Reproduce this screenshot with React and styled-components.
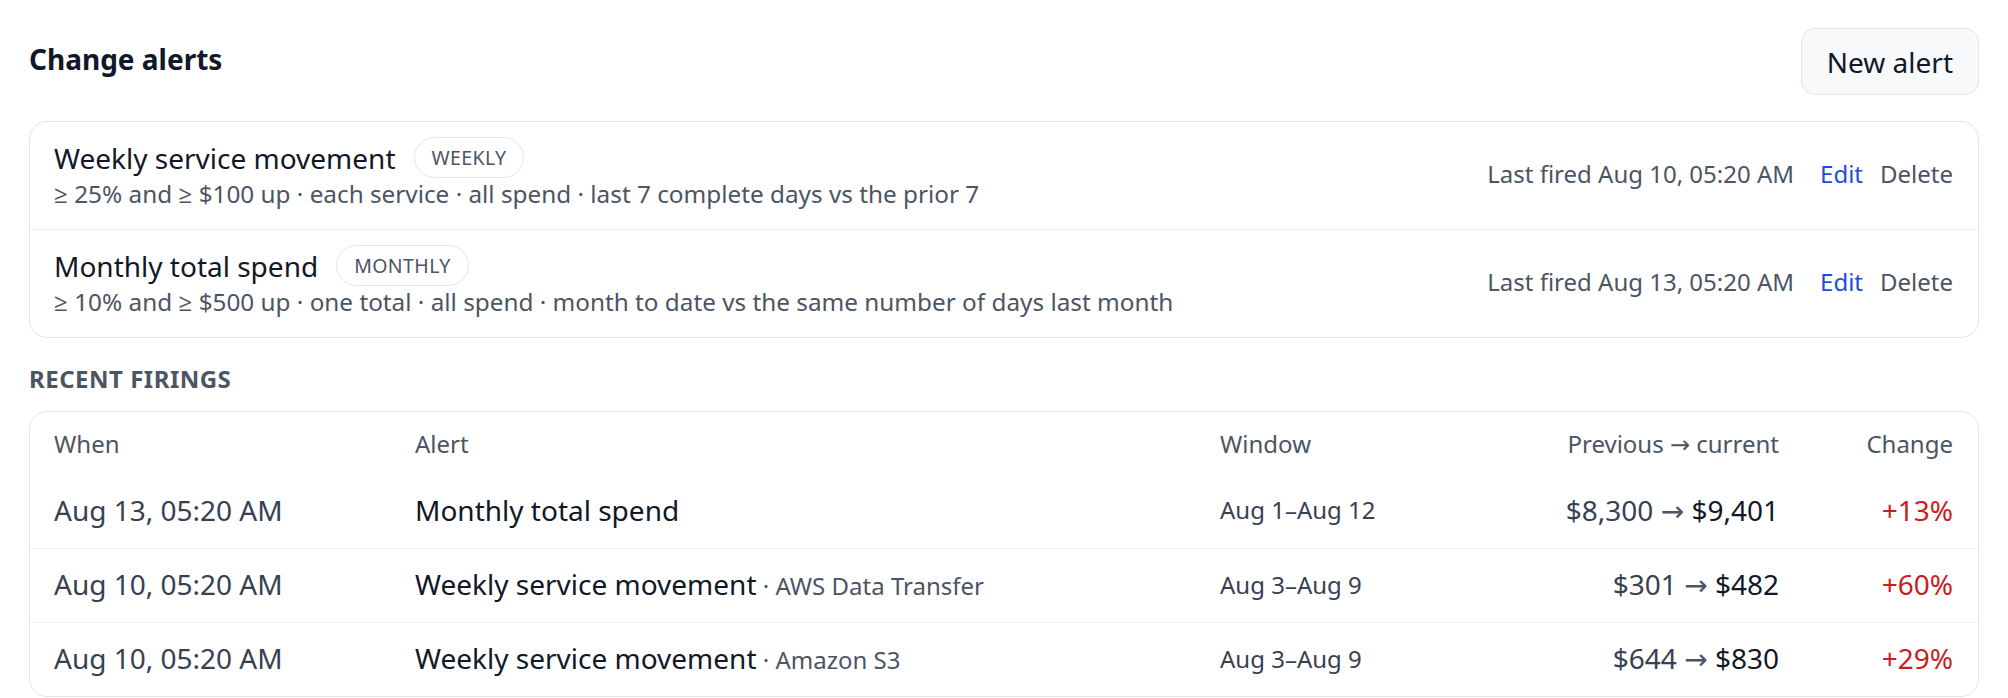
import React from 'react'
import styled, { createGlobalStyle } from 'styled-components'

const GlobalStyle = createGlobalStyle`
  body {
    margin: 0;
    background: #fff;
    font-family: "Noto Sans", "Open Sans", sans-serif;
    color: #111827;
  }
`

const Page = styled.div`
  padding: 28px 29px 0;
`

const TopBar = styled.div`
  display: flex;
  justify-content: space-between;
  align-items: center;
  margin-bottom: 26px;
`

const Heading = styled.h1`
  margin: 0 0 6px;
  font-size: 28px;
  font-weight: 700;
  color: #111827;
`

const Button = styled.button`
  height: 67px;
  padding: 0 25px;
  border: 1px solid #e3e5ea;
  border-radius: 14px;
  background: #f8f9fb;
  font-family: inherit;
  font-size: 28px;
  color: #111827;
  cursor: pointer;
`

const Card = styled.div`
  border: 1px solid #e3e5ea;
  border-radius: 18px;
  overflow: hidden;
`

const AlertRow = styled.div`
  display: flex;
  align-items: center;
  justify-content: space-between;
  padding: 15px 25px 19px 24px;
  & + & {
    border-top: 1px solid #eceef1;
  }
`

const TitleLine = styled.div`
  display: flex;
  align-items: center;
  gap: 18px;
  height: 41px;
`

const AlertName = styled.span`
  font-size: 28px;
  color: #111827;
`

const Badge = styled.span`
  display: inline-flex;
  align-items: center;
  height: 41px;
  box-sizing: border-box;
  padding: 0 17px;
  border: 1.5px solid #e3e5ea;
  border-radius: 999px;
  font-size: 19.5px;
  letter-spacing: 0.4px;
  color: #4b5563;
`

const Summary = styled.div`
  font-size: 24.3px;
  line-height: 32px;
  color: #4b5563;
`

const Actions = styled.div`
  display: flex;
  align-items: center;
  gap: 17px;
  font-size: 24px;
  color: #4b5563;
`

const LastFired = styled.span`
  margin-right: 9px;
`

const ActionLink = styled.a`
  color: ${(p) => (p.$primary ? '#1d4ed8' : '#4b5563')};
  text-decoration: none;
  cursor: pointer;
`

const SectionLabel = styled.div`
  margin: 24px 0 16px;
  font-size: 24px;
  font-weight: 700;
  letter-spacing: 0.5px;
  color: #4b5563;
  text-transform: uppercase;
`

const Grid = styled.div`
  display: grid;
  grid-template-columns: 361px 805px 1fr 240px 174px;
  align-items: center;
  box-sizing: border-box;
  padding: 0 25px ${(p) => (p.$head ? '0' : '3px')} 24px;
  height: ${(p) => (p.$head ? '62px' : '74px')};
  & + & + & {
    border-top: 1px solid #eceef1;
  }
`

const HeadCell = styled.div`
  font-size: 24px;
  color: #4b5563;
  text-align: ${(p) => (p.$right ? 'right' : 'left')};
`

const Cell = styled.div`
  font-size: ${(p) => (p.$small ? '24px' : '28px')};
  color: ${(p) => p.$color || '#111827'};
  text-align: ${(p) => (p.$right ? 'right' : 'left')};
  white-space: nowrap;
`

const Service = styled.span`
  font-size: 24px;
  color: #4b5563;
`

const Prev = styled.span`
  color: #374151;
`

const Arrow = styled.span`
  font-family: "DejaVu Sans", sans-serif;
  color: #4b5563;
`

const alerts = [
  {
    name: 'Weekly service movement',
    badge: 'Weekly',
    summary: '≥ 25% and ≥ $100 up · each service · all spend · last 7 complete days vs the prior 7',
    fired: 'Aug 10, 05:20 AM',
  },
  {
    name: 'Monthly total spend',
    badge: 'Monthly',
    summary: '≥ 10% and ≥ $500 up · one total · all spend · month to date vs the same number of days last month',
    fired: 'Aug 13, 05:20 AM',
  },
]

const firings = [
  { when: 'Aug 13, 05:20 AM', alert: 'Monthly total spend', window: 'Aug 1–Aug 12', prev: '$8,300', cur: '$9,401', change: '+13%' },
  { when: 'Aug 10, 05:20 AM', alert: 'Weekly service movement', service: 'AWS Data Transfer', window: 'Aug 3–Aug 9', prev: '$301', cur: '$482', change: '+60%' },
  { when: 'Aug 10, 05:20 AM', alert: 'Weekly service movement', service: 'Amazon S3', window: 'Aug 3–Aug 9', prev: '$644', cur: '$830', change: '+29%' },
]

const App = () => {
  return (
    <Page>
      <GlobalStyle />
      <TopBar>
        <Heading>Change alerts</Heading>
        <Button>New alert</Button>
      </TopBar>

      <Card>
        {alerts.map((a) => (
          <AlertRow key={a.name}>
            <div>
              <TitleLine>
                <AlertName>{a.name}</AlertName>
                <Badge>{a.badge.toUpperCase()}</Badge>
              </TitleLine>
              <Summary>{a.summary}</Summary>
            </div>
            <Actions>
              <LastFired>Last fired {a.fired}</LastFired>
              <ActionLink $primary>Edit</ActionLink>
              <ActionLink>Delete</ActionLink>
            </Actions>
          </AlertRow>
        ))}
      </Card>

      <SectionLabel>Recent firings</SectionLabel>

      <Card>
        <Grid $head>
          <HeadCell>When</HeadCell>
          <HeadCell>Alert</HeadCell>
          <HeadCell>Window</HeadCell>
          <HeadCell $right>Previous <Arrow>→</Arrow> current</HeadCell>
          <HeadCell $right>Change</HeadCell>
        </Grid>
        {firings.map((f, i) => (
          <Grid key={i}>
            <Cell $color="#374151">{f.when}</Cell>
            <Cell>
              {f.alert}
              {f.service && <Service> · {f.service}</Service>}
            </Cell>
            <Cell $small $color="#374151">{f.window}</Cell>
            <Cell $right>
              <Prev>{f.prev}</Prev> <Arrow>→</Arrow> {f.cur}
            </Cell>
            <Cell $right $color="#c81e1e">{f.change}</Cell>
          </Grid>
        ))}
      </Card>
    </Page>
  )
}

export default App
